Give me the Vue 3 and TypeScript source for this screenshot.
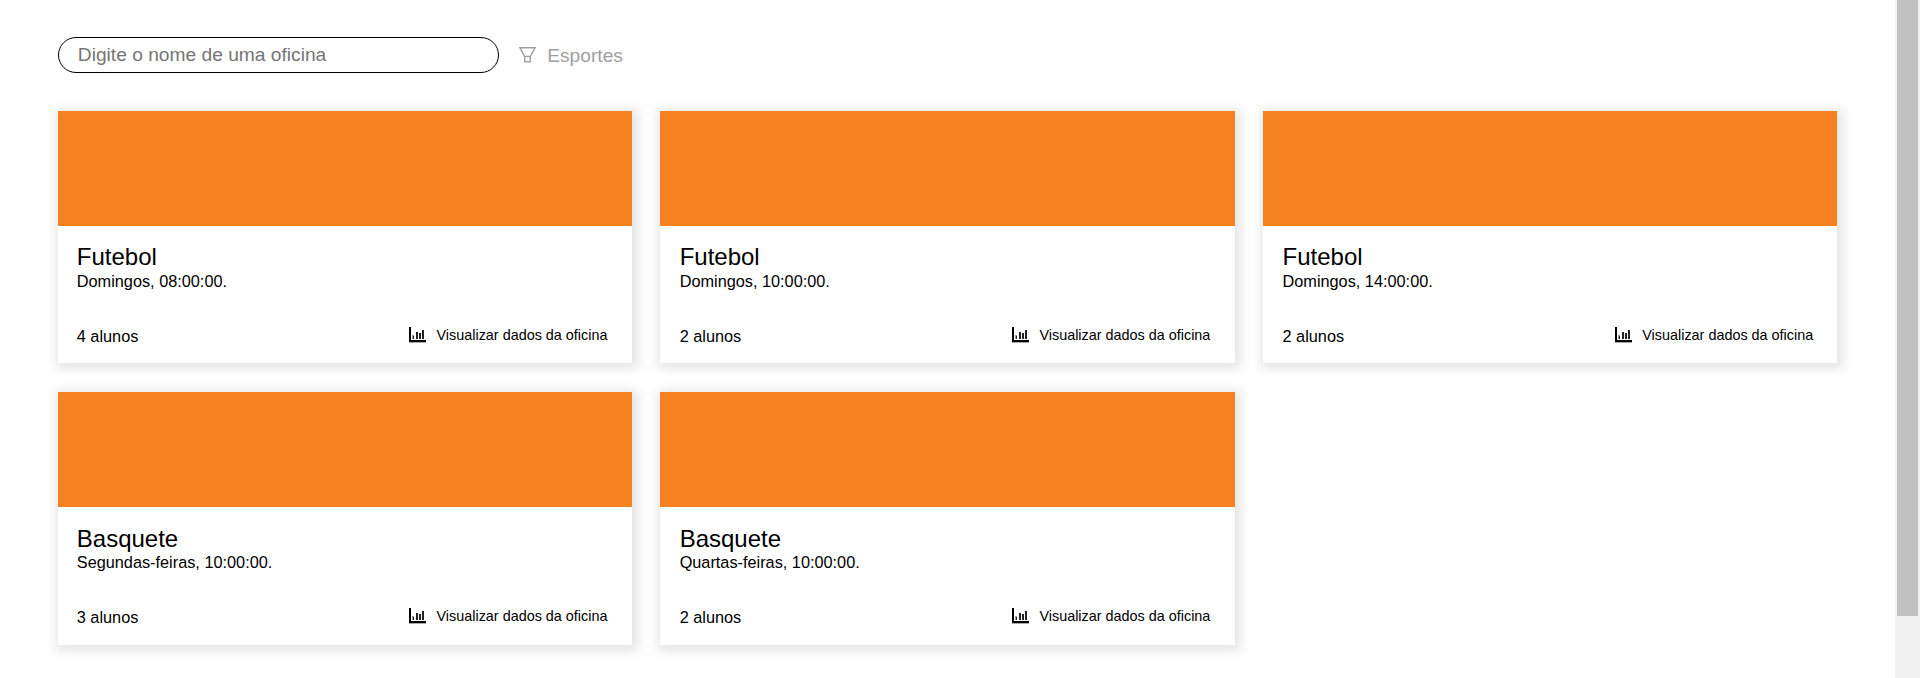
<script setup lang="ts">
interface Workshop {
  id: number
  name: string
  schedule: string
  students: number
}

const workshops: Workshop[] = [
  { id: 1, name: 'Futebol', schedule: 'Domingos, 08:00:00.', students: 4 },
  { id: 2, name: 'Futebol', schedule: 'Domingos, 10:00:00.', students: 2 },
  { id: 3, name: 'Futebol', schedule: 'Domingos, 14:00:00.', students: 2 },
  { id: 4, name: 'Basquete', schedule: 'Segundas-feiras, 10:00:00.', students: 3 },
  { id: 5, name: 'Basquete', schedule: 'Quartas-feiras, 10:00:00.', students: 2 },
]
</script>

<template>
  <div class="page">
    <main class="content">
      <div class="toolbar">
        <input class="search" type="text" placeholder="Digite o nome de uma oficina" />
        <div class="filter">
          <svg class="filter-icon" viewBox="0 0 17 16" fill="none" stroke="currentColor" stroke-width="1.4">
            <path d="M.9.7h15.2L11.3 9.5H5.7z" />
            <path d="M5.7 9.5v5.3h5.6V9.5" />
          </svg>
          <span>Esportes</span>
        </div>
      </div>
      <section class="grid">
        <article v-for="w in workshops" :key="w.id" class="card">
          <div class="banner"></div>
          <div class="body">
            <h2 class="name">{{ w.name }}</h2>
            <p class="schedule">{{ w.schedule }}</p>
            <div class="footer">
              <span class="students">{{ w.students }} alunos</span>
              <a class="details">
                <svg class="chart-icon" viewBox="0 0 17 16">
                  <path fill="#000" d="M0 0h2v13h15v2H0z" />
                  <path fill="#aaa" d="M0 15h17v1H0z" />
                  <path fill="#222" d="M4 9h1v3H4zM7 5h2v7H7zM10 6h2v6h-2zM13 3h2v9h-2z" />
                  <path fill="#999" d="M3 8h2v1H3zM3 9h1v3H3z" />
                </svg>
                <span>Visualizar dados da oficina</span>
              </a>
            </div>
          </div>
        </article>
      </section>
    </main>
    <div class="track"><div class="thumb"></div></div>
  </div>
</template>

<style>
body {
  margin: 0;
  overflow: hidden;
}
</style>

<style scoped>
.page {
  display: flex;
  height: 678px;
  background: #fff;
  color: #000;
  font-family: "Liberation Sans", Arial, sans-serif;
}
.content {
  flex: 1;
  padding: 37px 57.6px 0;
}
.toolbar {
  display: flex;
  height: 36px;
  margin-bottom: 38px;
}
.search {
  box-sizing: border-box;
  width: 441.6px;
  height: 36px;
  padding: 0 19.2px 1px;
  border: 1px solid #000;
  border-radius: 19.2px;
  outline: none;
  background: #fff;
  font: 19.2px "Liberation Sans", Arial, sans-serif;
}
.search::placeholder {
  color: #757575;
}
.filter {
  display: flex;
  align-items: center;
  margin-left: 19.8px;
  color: #a0a0a0;
  font-size: 19.2px;
}
.filter span {
  padding-top: 2px;
}
.filter-icon {
  width: 17px;
  height: 16px;
  margin-right: 11.2px;
}
.grid {
  display: grid;
  grid-template-columns: repeat(3, 1fr);
  gap: 28.8px;
}
.card {
  height: 252.4px;
  background: #fff;
  box-shadow: 2px 2px 10px 4px rgba(0, 0, 0, 0.1);
}
.banner {
  height: 115.2px;
  background: #f6821f;
}
.body {
  padding: 17.25px 19.2px 0;
}
.name {
  margin: 0 0 -0.25px;
  font-size: 24px;
  font-weight: 400;
  line-height: 28px;
}
.schedule {
  margin: 0;
  font-size: 16.3px;
  line-height: 20px;
}
.footer {
  display: flex;
  justify-content: space-between;
  align-items: center;
  height: 20px;
  margin-top: 35px;
}
.students {
  font-size: 16.3px;
}
.details {
  display: flex;
  align-items: center;
  margin-right: 5px;
  padding-bottom: 2px;
  font-size: 14.4px;
}
.chart-icon {
  width: 17px;
  height: 16px;
  margin-right: 10.6px;
}
.track {
  box-sizing: border-box;
  width: 25px;
  padding: 0 2px;
  background: #f1f1f1;
}
.thumb {
  height: 616px;
  background: #c1c1c1;
}
</style>
